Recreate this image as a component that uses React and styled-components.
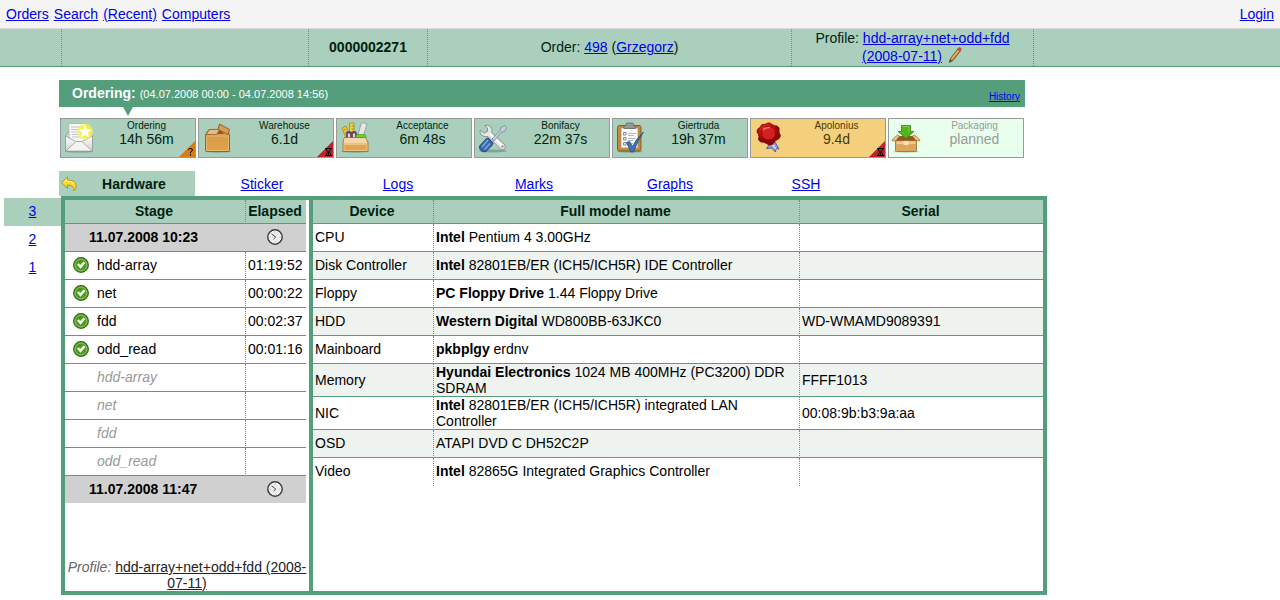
import React from "react";
import styled, { createGlobalStyle } from "styled-components";

const GREEN = "#559e7c";
const LIGHT = "#abcfbd";

const Global = createGlobalStyle`
  * { box-sizing: border-box; }
  body {
    margin: 0;
    background: #fff;
    color: #000;
    font: 14px/16px "Liberation Sans", Arial, Helvetica, sans-serif;
  }
  a { color: #0000ee; }
`;

const TopBar = styled.header`
  display: flex;
  justify-content: space-between;
  height: 29px;
  padding: 6px;
  background: #f4f4f4;
  border-bottom: 1px solid #dcdcdc;
`;

const TopLinks = styled.nav`
  display: flex;
  gap: 5px;
`;

const InfoBar = styled.div`
  display: grid;
  grid-template-columns: 62px 247fr 119fr 364fr 242fr 246fr;
  min-height: 38px;
  background: ${LIGHT};
  border-bottom: 1px solid ${GREEN};
  color: #001f10;
`;

const InfoCell = styled.div`
  display: flex;
  align-items: center;
  justify-content: center;
  padding: 0 20px 1px;
  border-right: 1px dotted ${GREEN};
  font-weight: ${(p) => (p.$strong ? "bold" : "normal")};
  line-height: 18px;
  text-align: center;
  &:last-child { border-right: 0; }
`;

const NoBreak = styled.span`
  white-space: nowrap;
`;

const InlineIcon = styled.svg`
  width: 16px;
  height: 16px;
  margin-left: 1px;
  vertical-align: -2px;
`;

const Progress = styled.section`
  margin: 13px 255px 0 59px;
`;

const ProgressTitle = styled.div`
  display: flex;
  align-items: center;
  justify-content: space-between;
  height: 27px;
  padding: 0 5px 0 13px;
  background: ${GREEN};
  color: #fff;
`;

const Heading = styled.h1`
  margin: 0;
  font-size: 14px;
  line-height: 16px;
`;

const Period = styled.span`
  font-size: 11px;
  font-weight: normal;
`;

const HistoryLink = styled.a`
  padding-top: 6px;
  font-size: 10px;
`;

const Pointer = styled.svg`
  display: block;
  width: 10px;
  height: 11px;
  margin-left: 64px;
`;

const Steps = styled.div`
  display: flex;
  gap: 2px;
  padding: 0 1px;
`;

const tones = {
  done: { bg: LIGHT, fg: "#001f10" },
  current: { bg: "#f4d07c", fg: "#4a3a08" },
  planned: { bg: "#e9ffed", fg: "#999999" },
};

const Step = styled.div`
  position: relative;
  display: flex;
  flex: 1;
  height: 40px;
  padding: 2px;
  border: 1px solid #999;
  background: ${(p) => tones[p.$tone].bg};
  color: ${(p) => tones[p.$tone].fg};
`;

const StepIcon = styled.svg`
  flex: none;
  width: 32px;
  height: 32px;
`;

const StepText = styled.div`
  flex: 1;
  padding-left: 5px;
  text-align: center;
`;

const StepName = styled.div`
  font-size: 10px;
  line-height: 10px;
`;

const Badge = styled.svg`
  position: absolute;
  right: 0;
  bottom: 0;
  width: 16px;
  height: 16px;
`;

const Tabs = styled.nav`
  display: flex;
  margin: 13px 233px 0 59px;
`;

const Tab = styled.div`
  display: flex;
  flex: 0 1 136px;
  align-items: center;
  justify-content: center;
  height: 25px;
  padding: 0 4px 0 2px;
  background: ${(p) => (p.$active ? LIGHT : "transparent")};
  color: #001f10;
  font-weight: ${(p) => (p.$active ? "bold" : "normal")};
`;

const TabIcon = styled.svg`
  flex: none;
  width: 16px;
  height: 16px;
`;

const TabLabel = styled.span`
  flex: 1;
  text-align: center;
`;

const Workspace = styled.main`
  display: flex;
  align-items: flex-start;
  padding: 0 233px 0 4px;
`;

const Runs = styled.nav`
  flex: none;
  width: 57px;
  margin-top: 2px;
`;

const Run = styled.div`
  height: 28px;
  padding-top: 5px;
  background: ${(p) => (p.$active ? LIGHT : "transparent")};
  text-align: center;
`;

const Frame = styled.div`
  display: flex;
  flex: 1;
  border: 4px solid ${GREEN};
`;

const StagePane = styled.section`
  display: flex;
  flex: none;
  flex-direction: column;
  justify-content: space-between;
  gap: 56px;
  width: 248px;
  border-right: 4px solid ${GREEN};
`;

const DevicePane = styled.section`
  flex: 1;
`;

const StageTable = styled.table`
  width: 241px;
  border-spacing: 0;
  table-layout: fixed;
`;

const DeviceTable = styled.table`
  width: 100%;
  border-spacing: 0;
  table-layout: fixed;
`;

const Col = styled.col`
  width: ${(p) => p.$width}px;
`;

const Th = styled.th`
  height: 24px;
  padding: 0 2px 1px 0;
  background: ${LIGHT};
  border-bottom: 1px solid ${GREEN};
  border-right: 1px dotted ${GREEN};
  color: #001f10;
  white-space: nowrap;
  &:last-child { border-right: 0; }
`;

const Td = styled.td`
  height: 28px;
  padding: 0 2px ${(p) => (p.$wraps ? 0 : 1)}px;
  border-bottom: 1px solid ${GREEN};
  border-right: 1px dotted ${GREEN};
  &:last-child { border-right: 0; }
`;

const DeviceRow = styled.tr`
  &:nth-child(even) { background: #eef3f0; }
  &:last-child td {
    padding-bottom: 2px;
    border-bottom: 0;
  }
`;

const DateRow = styled.tr`
  background: #d0d0d0;
  th, td {
    height: 28px;
    padding: 0 2px 1px 0;
    border-bottom: 1px solid ${GREEN};
    text-align: center;
  }
  th {
    padding-left: 24px;
    text-align: left;
  }
  &:last-child th, &:last-child td {
    height: 27px;
    border-bottom: 0;
  }
`;

const StageName = styled.div`
  display: flex;
  align-items: center;
  gap: 8px;
  padding-left: ${(p) => (p.$pending ? 30 : 6)}px;
  color: ${(p) => (p.$pending ? "#999" : "#000")};
  font-style: ${(p) => (p.$pending ? "italic" : "normal")};
`;

const SmallIcon = styled.svg`
  display: block;
  width: 16px;
  height: 16px;
`;

const ClockIcon = styled(SmallIcon)`
  margin: 0 auto;
`;

const ProfileNote = styled.p`
  margin: 0;
  color: #666;
  text-align: center;
  a { color: #222; }
`;

function Pencil() {
  return (
    <InlineIcon viewBox="0 0 16 16" aria-hidden="true">
      <path d="M2.500 15.200 3.500 11.500 10.800 2 13.300 4 6 13.500Z" fill="#cf9238" stroke="#5f421c" strokeWidth=".8" />
      <path d="M4.800 11.800 11.500 3.200" stroke="#f2cf80" strokeWidth="1" />
      <path d="M10.600 2.200 11.800.7Q13.500.3 14.300 2L13.200 4Z" fill="#dc4a3e" stroke="#8d4038" strokeWidth=".5" />
      <path d="m2.400 15.400.8-2.900 1.700 1.400Z" fill="#4a3b2c" />
    </InlineIcon>
  );
}

function Envelope() {
  return (
    <StepIcon viewBox="0 0 32 32" aria-hidden="true">
      <defs>
        <radialGradient id="glow">
          <stop offset=".4" stopColor="#fff200" />
          <stop offset=".75" stopColor="#f6f35c" stopOpacity=".8" />
          <stop offset="1" stopColor="#f6f37c" stopOpacity="0" />
        </radialGradient>
        <linearGradient id="paper" x2="0" y2="1">
          <stop stopColor="#fff" />
          <stop offset="1" stopColor="#cfd1cf" />
        </linearGradient>
      </defs>
      <ellipse cx="16" cy="30.500" rx="14" ry="1.300" fill="#6f8a7c" opacity=".5" />
      <path d="M2.500 15 6 10H26L29.500 15V30H2.500Z" fill="#d8dad8" stroke="#8b908d" strokeWidth=".8" />
      <path d="M5.500 2.500H23.500L25.500 20 16 24 6.500 20Z" fill="#fafafa" stroke="#a3a7a4" strokeWidth=".7" />
      <path d="M8 6H20M8 8.500H20M8.300 11H22M8.500 13.500H23M9 16H23" stroke="#b8bbb9" strokeWidth=".9" />
      <path d="M2.500 15 13 20.500H19L29.500 15V30H2.500Z" fill="url(#paper)" stroke="#949895" strokeWidth=".8" />
      <path d="M3.500 29.500 13 20.500H19L28.500 29.500" fill="#f4f4f4" stroke="#9da09e" strokeWidth=".8" />
      <circle cx="22" cy="10.500" r="9" fill="url(#glow)" />
      <path d="m22 4 1.900 4.200 4.500.5-3.400 3.100 1 4.500-4-2.300-4 2.300 1-4.500-3.400-3.100 4.500-.5Z" fill="#fff" />
    </StepIcon>
  );
}

function Carton() {
  return (
    <StepIcon viewBox="0 0 32 32" aria-hidden="true">
      <defs>
        <linearGradient id="carton" x2="0" y2="1">
          <stop stopColor="#d29a4c" />
          <stop offset="1" stopColor="#e0a24a" />
        </linearGradient>
      </defs>
      <ellipse cx="17" cy="30.500" rx="13" ry="1.200" fill="#567567" opacity=".5" />
      <path d="M4.500 13.500 8 8.500H25L28.500 13.500V29Q28.500 30.500 27 30.500H6Q4.500 30.500 4.500 29Z" fill="url(#carton)" stroke="#8e5a1d" strokeWidth=".9" />
      <path d="M8 8.500H24L22 13H6Z" fill="#8f5c27" />
      <path d="M5 13.500 8.500 8.500 19 8.200 15.500 13.500Z" fill="#e5bc82" stroke="#946126" strokeWidth=".8" />
      <path d="M17 8.500 18.500 3 28.500 8.500 27 13.500Z" fill="#d79c50" stroke="#8e5a1d" strokeWidth=".9" />
      <path d="M5.500 15H27.500V29.500H5.500Z" fill="none" stroke="#edbd73" strokeWidth=".8" />
    </StepIcon>
  );
}

function Toolbox() {
  return (
    <StepIcon viewBox="0 0 32 32" aria-hidden="true">
      <ellipse cx="16" cy="30.500" rx="14" ry="1.200" fill="#567567" opacity=".5" />
      <path d="M10.500 2H15V17H10.500Z" fill="#f3d23b" stroke="#a28518" strokeWidth=".8" />
      <path d="m3 7 4-2 5 13-4 1Z" fill="#f0cc39" stroke="#a28518" strokeWidth=".8" />
      <path d="M12.500 5H14.500M12.500 8H14.500M5 9 7 8M6 12 8 11" stroke="#806a12" strokeWidth=".7" />
      <path d="m22 3 2-1.500 4 1.500-.5 2-4 12-5-1Z" fill="#e6e8e6" stroke="#8d948f" strokeWidth=".8" />
      <path d="M8 18V13Q8 11 10 11T12 13V18M13 18V13Q13 11 15 11T17 13V18" fill="none" stroke="#63426d" strokeWidth="1.800" />
      <path d="M10 18V13M15 18V13" stroke="#f1eaf3" strokeWidth="1.400" />
      <path d="M17 15Q17 13.500 19 13.500H25Q27 13.500 27 16V18H17Z" fill="#73cf35" stroke="#4a9a1f" strokeWidth=".7" />
      <path d="M5.500 16.500H26L29 21V29.500Q29 30.500 28 30.500H5Q4 30.500 4 29.500V21Z" fill="#e1ad66" stroke="#9c6825" strokeWidth=".8" />
      <path d="M5.500 17H26.500L28.500 22.500H4.500Z" fill="#f5d6aa" />
      <path d="M5 23.500H28V29.500H5Z" fill="#dfa657" stroke="#f6cd8f" strokeWidth=".7" />
    </StepIcon>
  );
}

function Tools() {
  return (
    <StepIcon viewBox="0 0 32 32" aria-hidden="true">
      <ellipse cx="16" cy="30" rx="14" ry="1.500" fill="#567567" opacity=".5" />
      <path d="M7.500 4.500Q11 3 14 6 16 9 14.500 11.500L28 24Q29 26.500 27.500 28 25.500 29.500 23.500 28L11 15.500Q7 16.500 4.500 14 2.500 11.500 3 9L7 12 10.500 10.500 10.500 7Z" fill="#e4e5e4" stroke="#858988" strokeWidth=".9" />
      <path d="M13 12.500 25.500 25" stroke="#fff" strokeWidth="1.500" />
      <path d="m15 18 8.500-9 .5-2.500 4-2 1.500 2-2 4-3 .5L17 20Z" fill="#c4d1dc" stroke="#7188a0" strokeWidth=".8" />
      <path d="m11 17 5 5-1 2.500-6 6Q6.500 31.500 4 29.500T3 24.500L9 18Z" fill="#3869ac" stroke="#1e4074" strokeWidth=".9" />
      <path d="m5 26 6-7M7.500 28.500 13 22.500" stroke="#82aadd" strokeWidth="1.300" />
      <circle cx="25.500" cy="25.500" r="1" fill="#737977" />
    </StepIcon>
  );
}

function Clipboard() {
  return (
    <StepIcon viewBox="0 0 32 32" aria-hidden="true">
      <ellipse cx="15" cy="30.500" rx="13" ry="1.200" fill="#567567" opacity=".5" />
      <rect x="2.500" y="4.500" width="23.500" height="25.500" rx="2" fill="#c58b3b" stroke="#7d501b" strokeWidth=".9" />
      <path d="M6 7H23V27H6Z" fill="#fafafa" stroke="#8f8068" strokeWidth=".6" />
      <path d="M9 7.500V5.500Q9 4.500 11 4.500V3Q11 2 12.500 2H17Q18.500 2 18.500 3V4.500Q20.500 4.500 20.500 6V7.500Z" fill="#959995" stroke="#646966" strokeWidth=".8" />
      <path d="M8.500 11.500H11V14H8.500ZM8.500 16.500H11V19H8.500ZM8.500 21.500H11V24H8.500Z" fill="#eee" stroke="#737875" strokeWidth=".8" />
      <path d="M13 12.500H21M13 14.500H19M13 17.500H20M13 19.500H18M13 22.500H18" stroke="#aaaead" strokeWidth=".9" />
      <path d="m11.500 21.500 3-1 3 5Q21 18 28.500 11 22.500 20 18.500 31H16Z" fill="#3f73b6" stroke="#234e88" strokeWidth=".8" />
    </StepIcon>
  );
}

function Seal() {
  return (
    <StepIcon viewBox="0 0 32 32" aria-hidden="true">
      <defs>
        <radialGradient id="wax" cx=".4" cy=".3">
          <stop stopColor="#f25a4c" />
          <stop offset=".5" stopColor="#d01313" />
          <stop offset="1" stopColor="#8f0505" />
        </radialGradient>
      </defs>
      <path d="m17 20 5 1 4 7-3-.5-.5 3.500-4-4-5 .5 2-3Z" fill="#8b9de0" stroke="#3d4c88" strokeWidth=".8" />
      <path d="m18 22 5 6" stroke="#dce2fa" strokeWidth="1.200" />
      <path d="M9 3.500Q12 4 15 2 17.500 1.500 19 3.500 21 5 24 5 27 6.500 26 9.500 25.500 12 27.500 14.500 27 18 23.500 19 21.500 20 19.500 23.500 16 25 13.500 22.500 11 20.500 8 21 4.500 19.500 6 15.500 6 13.500 4 11 3.500 8 7 6.500Z" fill="url(#wax)" stroke="#830808" strokeWidth=".9" />
      <circle cx="15.500" cy="12" r="7" fill="#d32020" stroke="#9e0808" strokeWidth="1" />
      <path d="M10 9Q12 6 17 6.500" fill="none" stroke="#f37a6c" strokeWidth="1.500" />
    </StepIcon>
  );
}

function Packing() {
  return (
    <StepIcon viewBox="0 0 32 32" aria-hidden="true">
      <ellipse cx="15" cy="30.500" rx="13" ry="1.200" fill="#8da795" opacity=".5" />
      <path d="M5 15H25V20H5Z" fill="#8b5a25" />
      <path d="M10.500 4.500H19.500V10.500H23L15 17.500 7 10.500H10.500Z" fill="#52b51e" stroke="#388013" strokeWidth=".8" />
      <path d="M12 5.500H18V11" fill="none" stroke="#8bd65a" strokeWidth=".8" />
      <path d="M4.500 19.500H25.500V29.500Q25.500 30.500 24.500 30.500H5.500Q4.500 30.500 4.500 29.500Z" fill="#dda65e" stroke="#9c6829" strokeWidth=".8" />
      <path d="m5 19.500-3.500.5-.5-1 5.500-5 2 1ZM25 19.500l3.500.5.5-1-5.500-5-2 1Z" fill="#efc78c" stroke="#a46f30" strokeWidth=".8" />
      <path d="M5.500 20.500H24.500V23H5.500Z" fill="#f2cb91" />
      <path d="M12.500 20V24H17.500V20" fill="#f5ddb7" />
    </StepIcon>
  );
}

function CornerBadge({ kind }) {
  const question = kind === "question";
  return (
    <Badge viewBox="0 0 16 16" role="img" aria-label={question ? "Unconfirmed" : "Overdue"}>
      <path d="M0 16 16 0V16Z" fill={question ? "#d87c14" : "#bf2228"} />
      {question ? (
        <path d="M9.500 9V8.500Q9.500 7.500 11.500 7.500T13.500 9Q13.500 10 11.500 11V12M11.500 13V14.500" fill="none" stroke="#000" strokeWidth="1" />
      ) : (
        <path d="M8 7.500H15M8 14.500H15M9.500 8V9.500L13.500 12.500V14M13.500 8V9.500L9.500 12.500V14M11.500 11V14" fill="none" stroke="#000" strokeWidth="1" />
      )}
    </Badge>
  );
}

function Check() {
  return (
    <SmallIcon viewBox="0 0 16 16" role="img" aria-label="Passed">
      <circle cx="8" cy="8" r="7.400" fill="#4b9a1c" stroke="#2f6d16" strokeWidth="1.100" />
      <circle cx="8" cy="8" r="5.900" fill="none" stroke="#a4cd87" strokeWidth=".8" />
      <path d="m4 7.800 1.700-1.600L7.300 8l3.200-3.500 2 1.500L7.500 11.800Z" fill="#fff" />
    </SmallIcon>
  );
}

function Clock() {
  return (
    <ClockIcon viewBox="0 0 16 16" aria-hidden="true">
      <circle cx="8" cy="8" r="7.200" fill="#ececec" stroke="#3c3c47" strokeWidth="1.500" />
      <circle cx="8" cy="8" r="5.800" fill="none" stroke="#fff" strokeWidth=".7" />
      <path d="M4.500 4.800 8.800 8 6.500 10.200" fill="none" stroke="#4b4b50" strokeWidth="1" />
      <path d="M8 2.500V3.300M8 12.700V13.500M2.500 8H3.300M12.700 8H13.500" stroke="#888" strokeWidth=".8" />
    </ClockIcon>
  );
}

function Back() {
  return (
    <TabIcon viewBox="0 0 16 16" aria-hidden="true">
      <path d="M.7 6.500 6.500.8V4.200Q14.500 3.500 15.200 9.500 15.500 12.500 13 15 13.300 9 6.500 9V12.300Z" fill="#f5db2c" stroke="#b78c12" strokeWidth=".9" />
      <path d="M2.500 6.500 5.700 3.400V5.200Q11.500 4.800 13.500 8" fill="none" stroke="#fff6a0" strokeWidth=".9" />
    </TabIcon>
  );
}

const steps = [
  { name: "Ordering", value: "14h 56m", tone: "done", Icon: Envelope, badge: "question" },
  { name: "Warehouse", value: "6.1d", tone: "done", Icon: Carton, badge: "late" },
  { name: "Acceptance", value: "6m 48s", tone: "done", Icon: Toolbox },
  { name: "Bonifacy", value: "22m 37s", tone: "done", Icon: Tools },
  { name: "Giertruda", value: "19h 37m", tone: "done", Icon: Clipboard },
  { name: "Apolonius", value: "9.4d", tone: "current", Icon: Seal, badge: "late" },
  { name: "Packaging", value: "planned", tone: "planned", Icon: Packing },
];

const stages = [
  ["hdd-array", "01:19:52"],
  ["net", "00:00:22"],
  ["fdd", "00:02:37"],
  ["odd_read", "00:01:16"],
  ["hdd-array", ""],
  ["net", ""],
  ["fdd", ""],
  ["odd_read", ""],
];

const devices = [
  { device: "CPU", vendor: "Intel", model: "Pentium 4 3.00GHz" },
  { device: "Disk Controller", vendor: "Intel", model: "82801EB/ER (ICH5/ICH5R) IDE Controller" },
  { device: "Floppy", vendor: "PC Floppy Drive", model: "1.44 Floppy Drive" },
  { device: "HDD", vendor: "Western Digital", model: "WD800BB-63JKC0", serial: "WD-WMAMD9089391" },
  { device: "Mainboard", vendor: "pkbplgy", model: "erdnv" },
  { device: "Memory", vendor: "Hyundai Electronics", model: "1024 MB 400MHz (PC3200) DDR SDRAM", serial: "FFFF1013", wraps: true },
  { device: "NIC", vendor: "Intel", model: "82801EB/ER (ICH5/ICH5R) integrated LAN Controller", serial: "00:08:9b:b3:9a:aa", wraps: true },
  { device: "OSD", model: "ATAPI DVD C DH52C2P" },
  { device: "Video", vendor: "Intel", model: "82865G Integrated Graphics Controller" },
];

export default function App() {
  return (
    <>
      <Global />
      <TopBar>
        <TopLinks>
          <a href="#orders">Orders</a>
          <a href="#search">Search</a>
          <a href="#recent">(Recent)</a>
          <a href="#computers">Computers</a>
        </TopLinks>
        <a href="#login">Login</a>
      </TopBar>
      <InfoBar>
        <InfoCell />
        <InfoCell />
        <InfoCell $strong>0000002271</InfoCell>
        <InfoCell>
          <span>
            Order: <a href="#order">498</a> (<a href="#user">Grzegorz</a>)
          </span>
        </InfoCell>
        <InfoCell>
          <span>
            Profile:{" "}
            <a href="#profile">
              hdd-array+net+odd+fdd <NoBreak>(2008-07-11)</NoBreak>
            </a>{" "}
            <Pencil />
          </span>
        </InfoCell>
        <InfoCell />
      </InfoBar>

      <Progress>
        <ProgressTitle>
          <Heading>
            Ordering: <Period>(04.07.2008 00:00 - 04.07.2008 14:56)</Period>
          </Heading>
          <HistoryLink href="#history">History</HistoryLink>
        </ProgressTitle>
        <Pointer viewBox="0 0 10 11" aria-hidden="true">
          <path d="M0 0H10L5 9Z" fill={GREEN} />
        </Pointer>
        <Steps>
          {steps.map(({ name, value, tone, Icon, badge }) => (
            <Step key={name} $tone={tone}>
              <Icon />
              <StepText>
                <StepName>{name}</StepName>
                <div>{value}</div>
              </StepText>
              {badge && <CornerBadge kind={badge} />}
            </Step>
          ))}
        </Steps>
      </Progress>

      <Tabs>
        <Tab $active>
          <Back />
          <TabLabel>Hardware</TabLabel>
        </Tab>
        {["Sticker", "Logs", "Marks", "Graphs", "SSH"].map((label) => (
          <Tab key={label}>
            <a href={`#${label.toLowerCase()}`}>{label}</a>
          </Tab>
        ))}
      </Tabs>

      <Workspace>
        <Runs>
          {[3, 2, 1].map((n) => (
            <Run key={n} $active={n === 3}>
              <a href={`#run-${n}`}>{n}</a>
            </Run>
          ))}
        </Runs>
        <Frame>
          <StagePane>
            <StageTable>
              <colgroup>
                <Col $width={181} />
                <Col $width={60} />
              </colgroup>
              <thead>
                <tr>
                  <Th>Stage</Th>
                  <Th>Elapsed</Th>
                </tr>
              </thead>
              <tbody>
                <DateRow>
                  <th scope="row">11.07.2008 10:23</th>
                  <td><Clock /></td>
                </DateRow>
                {stages.map(([name, elapsed], i) => (
                  <tr key={i}>
                    <Td>
                      <StageName $pending={!elapsed}>
                        {elapsed && <Check />}
                        {name}
                      </StageName>
                    </Td>
                    <Td>{elapsed}</Td>
                  </tr>
                ))}
                <DateRow>
                  <th scope="row">11.07.2008 11:47</th>
                  <td><Clock /></td>
                </DateRow>
              </tbody>
            </StageTable>
            <ProfileNote>
              <em>Profile:</em>{" "}
              <a href="#profile">
                hdd-array+net+odd+fdd (2008-<wbr />07-11)
              </a>
            </ProfileNote>
          </StagePane>
          <DevicePane>
            <DeviceTable>
              <colgroup>
                <Col $width={121} />
                <Col $width={366} />
                <col />
              </colgroup>
              <thead>
                <tr>
                  <Th>Device</Th>
                  <Th>Full model name</Th>
                  <Th>Serial</Th>
                </tr>
              </thead>
              <tbody>
                {devices.map(({ device, vendor, model, serial, wraps }) => (
                  <DeviceRow key={device}>
                    <Td $wraps={wraps}>{device}</Td>
                    <Td $wraps={wraps}>
                      {vendor && <strong>{vendor} </strong>}
                      {model}
                    </Td>
                    <Td $wraps={wraps}>{serial}</Td>
                  </DeviceRow>
                ))}
              </tbody>
            </DeviceTable>
          </DevicePane>
        </Frame>
      </Workspace>
    </>
  );
}
